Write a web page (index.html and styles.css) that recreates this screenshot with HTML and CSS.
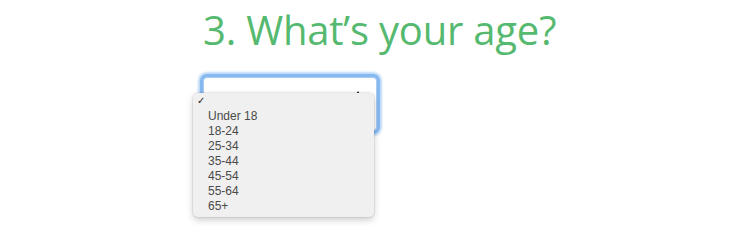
FILE: index.html
```html
<!DOCTYPE html>
<html lang="en">
<head>
    <meta charset="UTF-8">
    <meta name="viewport" content="width=device-width, initial-scale=1.0">
    <title>What's your age?</title>
    <link rel="stylesheet" href="styles.css">
</head>
<body>
    <div class="pergunta">
        <h1 class="titulo">3. What’s your age?</h1>
        <div class="campo">
            <div class="caixa">
                <span class="seta"></span>
            </div>
            <ul class="lista">
                <li class="marcado"></li>
                <li>Under 18</li>
                <li>18-24</li>
                <li>25-34</li>
                <li>35-44</li>
                <li>45-54</li>
                <li>55-64</li>
                <li>65+</li>
            </ul>
        </div>
    </div>
</body>
</html>
```

FILE: styles.css
```css
* {
    margin: 0;
    padding: 0;
    box-sizing: border-box;
}
body {
    background-color: #fff;
    width: 750px;
    height: 232px;
    overflow: hidden;
}
.pergunta {
    padding-left: 203px;
    padding-top: 10px;
}
.titulo {
    font-family: "Open Sans", sans-serif;
    font-weight: 400;
    font-size: 40px;
    line-height: 40px;
    color: #55b96f;
    letter-spacing: -0.2px;
}
.campo {
    position: relative;
    margin-top: 27px;
    width: 174px;
}
.caixa {
    position: relative;
    height: 54px;
    background-color: #fff;
    border: 1px solid #a9cbf1;
    border-radius: 4px;
    box-shadow: 0 0 0 3px #86b9f0, 0 0 2px 5px rgba(134, 185, 240, 0.55);
}
.seta {
    position: absolute;
    right: 16px;
    top: 13px;
    width: 0;
    height: 0;
    border-left: 2.5px solid transparent;
    border-right: 2.5px solid transparent;
    border-bottom: 3px solid #333;
}
.lista {
    position: absolute;
    top: 16px;
    left: -10px;
    width: 181px;
    list-style: none;
    padding: 1px 0 3px;
    background-color: #f0f0f0;
    border-radius: 5px;
    box-shadow: 0 0 0 1px rgba(0, 0, 0, 0.06), 0 3px 7px rgba(0, 0, 0, 0.2);
    font-family: "Liberation Sans", Arial, sans-serif;
    font-size: 12px;
    color: #4a4a4a;
}
.lista li {
    height: 15px;
    line-height: 15px;
    padding-left: 15px;
}
.marcado {
    position: relative;
}
.marcado::before {
    content: "✓";
    position: absolute;
    left: 4px;
    top: -1px;
    font-family: "DejaVu Sans", sans-serif;
    font-size: 10px;
    color: #222;
}
```
